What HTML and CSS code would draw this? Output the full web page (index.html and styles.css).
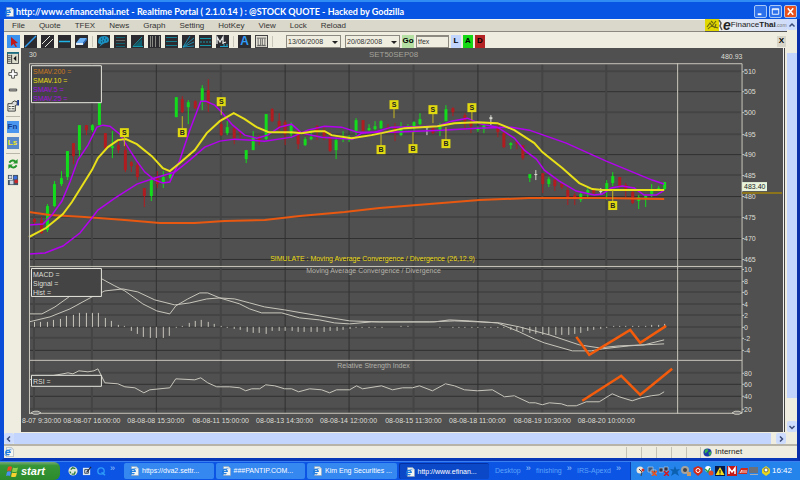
FILE: index.html
```html
<!DOCTYPE html>
<html lang="en">

<head>
    <meta charset="UTF-8">
    <meta name="viewport" content="width=device-width, initial-scale=1.0">
    <title>Realtime Portal - @STOCK QUOTE</title>
    <link rel="stylesheet" href="styles.css">
</head>

<body>
    <svg class="defs" aria-hidden="true">
        <symbol id="ie" viewBox="0 0 12 12">
            <path d="M3 .5h6l2.500 2.500v8.500H3z" fill="#f4f6f2" stroke="#8a97a8" stroke-width=".6"/>
            <path d="M9 .5V3h2.500z" fill="#b7c4d8"/>
            <path d="M2 6.500h5.500a2.700 2.700 0 1 0-1 2.200" fill="none" stroke="#1c7be0" stroke-width="1.500"/>
            <path d="M1.500 8Q0 11 3.500 9.500M6 3q2.500-1.500 2.500 1" fill="none" stroke="#1c7be0" stroke-width=".7"/>
        </symbol>
    </svg>

    <header class="titlebar">
        <svg class="icon"><use href="#ie"/></svg>
        <h1>http://www.efinancethai.net - Realtime Portal ( 2.1.0.14 ) : @STOCK QUOTE - Hacked by Godzilla</h1>
        <div class="window-buttons">
            <button aria-label="Minimize"><svg viewBox="0 0 12 12"><path d="M3 9h4" stroke="#fff" stroke-width="2"/></svg></button>
            <button aria-label="Maximize"><svg viewBox="0 0 12 12"><path d="M2.500 3h7v6h-7zM2.500 4h7" fill="none" stroke="#fff"/></svg></button>
            <button class="close" aria-label="Close"><svg viewBox="0 0 12 12"><path d="M3 2.500l6 7M9 2.500l-6 7" stroke="#fff" stroke-width="1.700"/></svg></button>
        </div>
    </header>

    <div class="window">
        <div class="page">
            <main class="content">
                <div class="top-row">
                    <nav class="menu">
                        <a href="#">File</a>
                        <a href="#">Quote</a>
                        <a href="#">TFEX</a>
                        <a href="#">News</a>
                        <a href="#">Graph</a>
                        <a href="#">Setting</a>
                        <a href="#">HotKey</a>
                        <a href="#">View</a>
                        <a href="#">Lock</a>
                        <a href="#">Reload</a>
                    </nav>
                    <div class="logo">
                        <svg class="logo-mark" viewBox="0 0 18 12">
                            <path d="M0 0h14v12H0z" fill="#e0d800"/>
                            <path d="M2 8l3-4 2 3 4-5M3 10q4-5 7-1M6 2l2 2M11 5l-1 3 3 1" fill="none" stroke="#6e6a10" stroke-width="1.200"/>
                            <path d="M14 1l2 3-1 3 2 4" fill="none" stroke="#555" stroke-width="1.500"/>
                        </svg>
                        <span class="logo-e">e</span><span>Finance</span><b>Thai</b><small>.com</small>
                    </div>
                </div>

                <div class="toolbar">
                    <button class="tool selected" aria-label="Pointer"><svg viewBox="0 0 13 13"><path d="M4 2l7 6-3 .5 2 3-1.500.5-2-3L4 11z" fill="#c01818"/></svg></button>
                    <button class="tool" aria-label="Line"><svg viewBox="0 0 13 13"><path d="M1 12L12 1" stroke="#2f9bf0" stroke-width="1.500"/></svg></button>
                    <button class="tool" aria-label="Parallel lines"><svg viewBox="0 0 13 13"><path d="M1 9l8-8M4 12l8-8" stroke="#e8e8e0"/></svg></button>
                    <button class="tool" aria-label="Horizontal line"><svg viewBox="0 0 13 13"><path d="M1 6.500h11" stroke="#1fb4e8" stroke-width="1.500"/></svg></button>
                    <button class="tool" aria-label="Eraser"><svg viewBox="0 0 13 13"><path d="M5 3h7l-4 5H1z" fill="#6ab0f4"/><path d="M1 8h7v2H1z" fill="#dce9f7"/><path d="M8 8l4-5v2L8 10z" fill="#2b6dc4"/></svg></button>
                    <span class="divider"></span>
                    <button class="tool" aria-label="Color"><svg viewBox="0 0 13 13"><path d="M1 7q0-6 6-6 5 0 5 4 0 3-4 3l-2 1-4 3 2-3q-3 0-3-2z" fill="#1b8fc0"/><path d="M4 4h1M7 3h1M9 5h1M4 7h1M6 6h1" stroke="#103040"/></svg></button>
                    <button class="tool" aria-label="Grid lines"><svg viewBox="0 0 13 13"><path d="M2 2.500h9M2 8.500h9M2 11.500h9" stroke="#12606e"/><path d="M2 5.500h9" stroke="#666"/></svg></button>
                    <button class="tool" aria-label="Fan"><svg viewBox="0 0 13 13"><path d="M3 11.500L11 4v7.500z" fill="#0c6070"/><path d="M2 11.500L11 2M2 11.500h10" stroke="#1496a8"/></svg></button>
                    <button class="tool" aria-label="Time zones"><svg viewBox="0 0 13 13"><path d="M2.500 1v11M4.500 1v11M7.500 1v11M11.500 1v11" stroke="#a0a098" stroke-width=".8"/></svg></button>
                    <button class="tool" aria-label="Retracement"><svg viewBox="0 0 13 13"><path d="M1 2.500h11M1 6.500h11M1 10.500h11" stroke="#147c8c"/></svg></button>
                    <button class="tool" aria-label="Speed lines"><svg viewBox="0 0 13 13"><path d="M1 12L8 1M1 12l11-9M1 12l11-5M1 12l11-1" stroke="#1ca0c8" stroke-width=".8"/></svg></button>
                    <button class="tool" aria-label="Channel"><svg viewBox="0 0 13 13"><path d="M1 3.500h11M1 10.500h11" stroke="#1496a8"/><path d="M1 7h11" stroke="#1496a8" stroke-dasharray="2 1"/></svg></button>
                    <button class="tool" aria-label="Magnet price"><svg viewBox="0 0 13 13"><path d="M1 9V2l3 5 3-5v7M7 8l3-1" fill="none" stroke="#e8e8e8" stroke-width="1.300"/><path d="M4 11.500h8M8 9v3M11 9v3" stroke="#1ca0c8"/></svg></button>
                    <span class="divider"></span>
                    <button class="tool letter">A</button>
                    <button class="tool pale" aria-label="Panels"><svg viewBox="0 0 13 13"><path d="M1 2.500h11M2.500 3v8h3V3M7.500 3v8h3V3M1 11.500h11" fill="none" stroke="#555"/></svg></button>
                    <span class="divider"></span>
                    <label class="date"><select aria-label="From date"><option>13/06/2008</option></select></label>
                    <label class="date"><select aria-label="To date"><option>20/08/2008</option></select></label>
                    <div class="symbol-box">
                        <button class="go">Go</button>
                        <input type="text" value="tfex" aria-label="Symbol">
                        <button class="mode-l">L</button>
                        <button class="mode-a">A</button>
                        <button class="mode-d">D</button>
                    </div>
                    <button class="close-chart">X</button>
                </div>

                <div class="workspace">
                    <aside class="side-tools">
                        <button aria-label="Toggle panel"><svg viewBox="0 0 13 13"><path d="M.5.5h12v12H.5z" fill="#dcdccc" stroke="#444"/><path d="M0 1h13" stroke="#1c6c80" stroke-width="2"/><path d="M1 4h3M1 6h3M1 8h3M1 10h3" stroke="#555"/><path d="M5 3v9" stroke="#333"/><path d="M10 4v6L7 7z" fill="#111"/></svg></button>
                        <button aria-label="Zoom in"><svg viewBox="0 0 13 13"><path d="M5 2h3v3h3v3H8v3H5V8H2V5h3z" fill="#fff" stroke="#444"/></svg></button>
                        <button aria-label="Zoom out"><svg viewBox="0 0 13 13"><path d="M2.500 5.500h8v2h-8z" fill="#bbb" stroke="#444"/></svg></button>
                        <button aria-label="Properties"><svg viewBox="0 0 13 13"><path d="M1 4h8v8H1z" fill="#f6f6ee" stroke="#333"/><path d="M2 7h2M5 7h3M2 9.500h2M5 9.500h3" stroke="#333"/><path d="M5 3l3-2 3 1v3l-2 1" fill="#ddd" stroke="#333"/><path d="M11 0h2v6h-2z" fill="#1c3c90"/></svg></button>
                        <hr>
                        <button class="blue-key">Fn</button>
                        <button class="blue-key yellow-key">Ls</button>
                        <hr>
                        <button aria-label="Refresh"><svg viewBox="0 0 13 13"><path d="M2.500 5q3-4 7-1M10.500 8q-3 4-7 1" fill="none" stroke="#24962c" stroke-width="2"/><path d="M11.500 1v5h-5zM1.500 12V7h5z" fill="#24962c"/></svg></button>
                        <button aria-label="Market map"><svg viewBox="0 0 13 13"><path d="M1 1h11v11H1z" fill="#456"/><path d="M2 2h3v3H2zM3 7h4v4H3z" fill="#cdd6e4"/><circle cx="9" cy="4" r="2" fill="#3a70e0"/><circle cx="10" cy="8" r="2" fill="#c82828"/><path d="M6 1v5H1" fill="none" stroke="#eee"/></svg></button>
                    </aside>

                    <svg class="chart" id="chart" viewBox="21 48 763 384" role="img" aria-label="SET50SEP08 price chart with MACD and RSI">
                        <g id="grid"></g>
                        <g id="candles"></g>
                        <g id="curves"></g>
                        <g id="markers"></g>
                        <path class="frame" d="M29.500 414V63.500h649M29 266.500h714M29 360.500h714M678.500 63v351M678 63.500h65v350M29 413.500h714"/>
                        <path class="slider" d="M31 413l3-1.500h4l3 1.500-3 1.500h-4zM733 413l3-1.500h4l3 1.500-3 1.500h-4z"/>

                        <text class="heading" x="394" y="57" text-anchor="middle">SET50SEP08</text>
                        <text class="label" x="29" y="57">30</text>
                        <text class="label" x="722" y="59">480.93</text>
                        <text class="simulate" x="373" y="261" text-anchor="middle">SIMULATE : Moving Average Convergence / Divergence (26,12,9)</text>
                        <text class="caption" x="374" y="273" text-anchor="middle">Moving Average Convergence / Divergence</text>
                        <text class="caption" x="374" y="368" text-anchor="middle">Relative Strength Index</text>

                        <path class="legend" d="M31.500 65.500h70v37h-70zM31.500 268.500h70v28h-70zM31.500 375.500h70v11h-70z"/>
                        <text class="label orange" x="33" y="74">SMAV.200 =</text>
                        <text class="label yellow" x="33" y="83">SMAV.10 =</text>
                        <text class="label purple" x="33" y="92">SMAV.5 =</text>
                        <text class="label purple" x="33" y="101">SMAV.25 =</text>
                        <text class="label" x="33" y="277">MACD =</text>
                        <text class="label" x="33" y="286">Signal =</text>
                        <text class="label" x="33" y="295">Hist =</text>
                        <text class="label" x="33" y="384">RSI =</text>

                        <path d="M743 193h40" stroke="#8c741c" stroke-width="2"/>
                        <path d="M743 182h25v9h-25z" fill="#e8f4dc"/>
                        <text class="last" x="745" y="189">483.40</text>
                    </svg>
                </div>
            </main>

            <div class="scroll-y">
                <button aria-label="Scroll up"><svg viewBox="0 0 10 10"><path d="M2.500 6.500L5 4l2.500 2.500" fill="none" stroke="#3a4a78" stroke-width="1.500"/></svg></button>
                <div class="thumb"></div>
                <button aria-label="Scroll down"><svg viewBox="0 0 10 10"><path d="M2.500 4L5 6.500 7.500 4" fill="none" stroke="#3a4a78" stroke-width="1.500"/></svg></button>
            </div>
        </div>

        <div class="scroll-x">
            <button aria-label="Scroll left"><svg viewBox="0 0 10 10"><path d="M6 2.500L3.500 5 6 7.500" fill="none" stroke="#3a4a78" stroke-width="1.500"/></svg></button>
            <div class="thumb"></div>
            <button aria-label="Scroll right"><svg viewBox="0 0 10 10"><path d="M4 2.500L6.500 5 4 7.500" fill="none" stroke="#3a4a78" stroke-width="1.500"/></svg></button>
        </div>

        <div class="statusbar">
            <svg class="icon"><use href="#ie"/></svg>
            <div class="panels"><i></i><i></i><i></i><i></i><i></i></div>
            <div class="zone">
                <svg viewBox="0 0 10 10"><circle cx="5" cy="5" r="4.500" fill="#1c3ca8"/><path d="M2 2l3-1 1 2-2 2-2 1zM6 5l3-1v3L7 9z" fill="#35b24a"/></svg>
                Internet
            </div>
        </div>
    </div>

    <footer class="taskbar">
        <button class="start">
            <svg viewBox="0 0 13 12"><path d="M2 2q2-1.500 4 0L5 6Q3 5 1 6z" fill="#ee4a20"/><path d="M7 2.500q2 1 5 0L11 6.500q-3 1-5 0z" fill="#8fd04a"/><path d="M1 7q2-1.500 4 0l-1 4q-2-1-4 0z" fill="#4a90f0"/><path d="M6 7.500q2 1 5 0l-1 4q-3 1-5 0z" fill="#f8d030"/></svg>
            start
        </button>
        <div class="quick">
            <svg viewBox="0 0 11 11"><circle cx="5.500" cy="5.500" r="5" fill="#e0e8dc"/><path d="M3 4l2-2 3 1M8 6L7 9H4M2 6l1 2" fill="none" stroke="#2a7a3c" stroke-width="1.500"/></svg>
            <svg viewBox="0 0 11 11"><path d="M1 2h8v8H1z" fill="#dce8f4"/><path d="M3 4h4v4H3z" fill="none" stroke="#345"/><path d="M5 7l5-6" stroke="#223" stroke-width="1.200"/></svg>
            <svg viewBox="0 0 11 11"><circle cx="5.500" cy="5.500" r="3.500" fill="none" stroke="#2f9bf8" stroke-width="1.500"/><path d="M6 7l4 3" stroke="#2f9bf8" stroke-width="1.500"/></svg>
            <span class="more">»</span>
        </div>
        <div class="tasks">
            <button><svg class="icon"><use href="#ie"/></svg><span>https://dva2.settr...</span></button>
            <button><svg class="icon"><use href="#ie"/></svg><span>###PANTIP.COM...</span></button>
            <button><svg class="icon"><use href="#ie"/></svg><span>Kim Eng Securities ...</span></button>
            <button class="active"><svg class="icon"><use href="#ie"/></svg><span>http://www.efinan...</span></button>
        </div>
        <div class="bands">
            <a href="#">Desktop</a><span class="more">»</span>
            <a href="#">finishing</a><span class="more">»</span>
            <a href="#">IRS-Apexd</a><span class="more">»</span>
        </div>
        <div class="tray">
            <svg viewBox="0 0 10 10"><circle cx="4" cy="4" r="3.500" fill="#e8e4dc"/><path d="M3 3l3 3-1 4" fill="none" stroke="#444"/><circle cx="7" cy="4" r="1.500" fill="#d83020"/></svg>
            <svg viewBox="0 0 10 10"><path d="M1 1h5v5H1zM4 4h5v4H4z" fill="#405878" stroke="#cde" stroke-width=".6"/><path d="M5 5l5 5M10 5l-5 5" stroke="#f05018" stroke-width="1.500"/></svg>
            <svg viewBox="0 0 10 10"><path d="M0 2h4v4H0zM5 1h4v4H5z" fill="#334" stroke="#cde" stroke-width=".6"/><path d="M5 5l5 5M10 5l-5 5" stroke="#d81818" stroke-width="1.500"/></svg>
            <svg viewBox="0 0 10 10"><path d="M5 0l1.300 3.500L10 3 7.500 5.700 9 10 5 7.500 1 10l1.500-4.300L0 3l3.700.5z" fill="#0c60b0"/></svg>
            <svg viewBox="0 0 10 10"><circle cx="4" cy="4" r="4" fill="#a8a49c"/><circle cx="4" cy="4" r="2" fill="#444"/><path d="M6 6h4v4H6z" fill="#c89a68"/></svg>
            <svg viewBox="0 0 10 10"><path d="M5 0l4.500 2v4L5 10 .5 6V2z" fill="#d42818"/><circle cx="5" cy="4.500" r="2" fill="none" stroke="#fff"/></svg>
            <svg viewBox="0 0 10 10"><circle cx="4" cy="3" r="3" fill="#fff"/><path d="M1 3l3 3 2-4" fill="none" stroke="#2aa048" stroke-width="1.500"/><circle cx="7" cy="7" r="2.500" fill="#e04828"/></svg>
            <svg viewBox="0 0 10 10"><path d="M0 0h10v10H0z" fill="#081848"/><path d="M5 1l4.500 8h-9z" fill="#f8e020"/><path d="M5 4v3M5 7.500v1" stroke="#111"/></svg>
            <svg viewBox="0 0 10 10"><path d="M0 0h10v10H0z" fill="#c41818"/><path d="M2 8V2l3 4 3-4v6" fill="none" stroke="#fff" stroke-width="1.500"/></svg>
            <svg viewBox="0 0 10 10"><path d="M0 8l3-6h7L9 8H0z" fill="#d42818"/><path d="M2 7l2-3v3M6 4v3M8 4v3" fill="none" stroke="#fff" stroke-width=".8"/></svg>
            <svg viewBox="0 0 10 10"><path d="M0 1h9v6H0z" fill="#6c7078"/><path d="M1 8h8v1H1z" fill="#a8acb0"/></svg>
            <svg viewBox="0 0 10 10"><path d="M1 3l4-3 4 3v4l-4 3-4-3z" fill="#e8d420"/><circle cx="5" cy="4" r="2" fill="#fff" stroke="#554" stroke-width=".8"/></svg>
            <time>16:42</time>
        </div>
    </footer>

    <script src="chart.js"></script>
</body>

</html>
```
FILE: styles.css
```css
* {
    box-sizing: border-box;
}

body {
    margin: 0;
    height: 100vh;
    display: flex;
    flex-direction: column;
    overflow: hidden;
    background: #0a54e0;
    font-family: "Liberation Sans", Arial, sans-serif;
    font-size: 8px;
    line-height: 10px;
    color: #333;
}

button {
    border: none;
    padding: 0;
    background: none;
    font-family: inherit;
    font-size: 8px;
    line-height: 10px;
}

a {
    color: inherit;
    text-decoration: none;
}

svg {
    display: block;
}

.defs {
    position: absolute;
    width: 0;
    height: 0;
}

.icon {
    width: 10px;
    height: 10px;
    flex: none;
}

/* Title bar */
.titlebar {
    flex: none;
    height: 19px;
    display: flex;
    align-items: center;
    gap: 2px;
    padding: 2px 3px 0 4px;
    border-top: 2px solid #2f8cf4;
    background: #0855e4;
}

.titlebar h1 {
    flex: 1;
    margin: 0;
    font-family: Lato, "Liberation Sans", sans-serif;
    font-size: 9px;
    line-height: 12px;
    font-weight: bold;
    color: #fff;
    white-space: nowrap;
}

.window-buttons {
    display: flex;
    gap: 2px;
}

.window-buttons button {
    width: 13px;
    height: 13px;
    border: 1px solid #a8c8f8;
    border-radius: 2px;
    background: #2c70ec;
}

.window-buttons .close {
    background: #e8501c;
}

/* Window body */
.window {
    flex: 1;
    min-height: 0;
    display: flex;
    flex-direction: column;
    border: solid #0a4cd8;
    border-width: 0 3px 3px 4px;
    border-right-color: #0a2ea8;
    border-bottom-color: #0838b8;
    background: #eeede0;
}

.page {
    flex: 1;
    min-height: 0;
    display: flex;
}

.content {
    flex: 1;
    min-width: 0;
    display: flex;
    flex-direction: column;
}

.top-row {
    flex: none;
    display: flex;
    height: 13px;
}

.menu {
    flex: 1;
    display: flex;
    align-items: center;
    gap: 14px;
    padding-left: 8px;
    border-top: 1px solid #f8f8f0;
    border-bottom: 1px solid #8c8a80;
    background: #dad8ca;
}

.logo {
    flex: none;
    width: 82px;
    display: flex;
    align-items: center;
    border-bottom: 1px solid #555;
    background: linear-gradient(90deg, #f0f0ec, #d0dcf8);
    color: #222;
}

.logo-mark {
    flex: none;
    width: 18px;
    height: 12px;
}

.logo-e {
    font-size: 14px;
    font-style: italic;
    font-weight: bold;
}

.logo small {
    font-size: 5px;
    color: #777;
}

/* Toolbar */
.toolbar {
    flex: none;
    height: 16px;
    display: flex;
    align-items: center;
    gap: 4px;
    padding: 2px 1px 0 3px;
}

.tool {
    flex: none;
    width: 13px;
    height: 13px;
    background: #2c2c30;
}

.tool.selected {
    background: #3a92ee;
}

.tool.letter {
    font-size: 12px;
    font-weight: bold;
    color: #2f9bf8;
}

.tool.pale {
    border: 1px solid #444;
    background: #e4e2d6;
}

.divider {
    width: 1px;
    height: 11px;
    background: #c8c6b8;
}

.divider:last-of-type {
    margin-right: 9px;
}

.date {
    position: relative;
    flex: none;
}

.date::after {
    content: "";
    position: absolute;
    right: 3px;
    top: 6px;
    border: 3px solid transparent;
    border-top-color: #222;
    border-bottom: 0;
    pointer-events: none;
}

.date select,
.symbol-box input {
    display: block;
    width: 55px;
    height: 13px;
    padding: 0 1px;
    appearance: none;
    border: 1px solid #8c8a80;
    border-radius: 0;
    background: #eeede0;
    font-family: "Liberation Sans", Arial, sans-serif;
    font-size: 7px;
    color: #333;
}

.symbol-box {
    display: flex;
    gap: 2px;
    margin-left: -2px;
}

.symbol-box input {
    width: 33px;
    border-width: 2px 1px 1px;
}

.symbol-box button {
    width: 10px;
    height: 13px;
    font-weight: bold;
}

.symbol-box .go {
    width: 12px;
    background: #b4e0a4;
}

.symbol-box .mode-l {
    background: #c0d4fc;
}

.symbol-box .mode-a {
    background: #14d814;
}

.symbol-box .mode-d {
    background: #b42424;
}

.close-chart {
    width: 9px;
    height: 11px;
    margin-left: auto;
    background: #d8d6c8;
    font-weight: bold;
}

/* Side tools and chart */
.workspace {
    flex: 1;
    min-height: 0;
    display: flex;
}

.side-tools {
    flex: none;
    width: 17px;
    display: flex;
    flex-direction: column;
    align-items: center;
    gap: 4px;
    padding-top: 4px;
}

.side-tools button {
    width: 12px;
    height: 12px;
}

.side-tools hr {
    width: 14px;
    height: 1px;
    margin: 0;
    border: none;
    background: #b8b6a8;
}

.side-tools .blue-key {
    background: #4a96ee;
    font-weight: bold;
    color: #123c90;
}

.side-tools .yellow-key {
    background: #5888c8;
    color: #f4e820;
}

.chart {
    flex: 1;
    min-width: 0;
    min-height: 0;
    margin-right: 3px;
    border-right: 1px solid #eee;
    background: #505050;
    box-shadow: 1px 0 #444;
    font-size: 7px;
}

.grid-soft {
    stroke: #444;
    stroke-width: 2;
}

.grid-dark {
    stroke: #303030;
}

.frame {
    fill: none;
    stroke: #c8c6bc;
}

.slider {
    fill: #777;
    stroke: #c8c6bc;
}

.legend {
    fill: #444;
    stroke: #e8e8e0;
}

.heading {
    font-size: 8px;
    fill: #a4a29a;
}

.caption {
    fill: #b4b2aa;
}

.label {
    fill: #deded6;
}

.simulate,
.yellow {
    fill: #ecdc14;
}

.orange {
    fill: #c87820;
}

.purple {
    fill: #a010e0;
}

.last {
    fill: #222;
}

.marker {
    fill: #e0d810;
}

.marker-text {
    font-weight: bold;
    fill: #222;
}

/* Scroll bars */
.scroll-y {
    flex: none;
    width: 10px;
    display: flex;
    flex-direction: column;
}

.scroll-y button,
.scroll-x button {
    flex: none;
    width: 10px;
    height: 11px;
    border-radius: 2px;
    background: #cddcfc;
}

.scroll-y .thumb {
    flex: 1;
    margin: 23px 0;
    background: #c3d5fd;
}

.scroll-x {
    flex: none;
    display: flex;
    height: 11px;
    padding-right: 11px;
    margin-top: 1px;
    background: #eeede0;
}

.scroll-x .thumb {
    flex: 1;
    margin-right: 5px;
    background: #c3d5fd;
}

/* Status bar */
.statusbar {
    flex: none;
    height: 14px;
    display: flex;
    align-items: center;
    border-top: 2px solid #b8b4a8;
}

.panels {
    display: flex;
    gap: 14px;
    margin-left: auto;
    padding-right: 13px;
}

.panels i,
.zone {
    border-left: 1px solid #c4c2b4;
    height: 11px;
}

.zone {
    width: 97px;
    display: flex;
    align-items: center;
    gap: 3px;
    padding-left: 2px;
    color: #222;
}

.zone svg {
    width: 9px;
    height: 9px;
}

/* Taskbar */
.taskbar {
    flex: none;
    height: 19px;
    display: flex;
    align-items: stretch;
    border-top: 1px solid #3a80f0;
    background: #0c54e4;
    color: #fff;
}

.start {
    width: 60px;
    display: flex;
    align-items: center;
    gap: 2px;
    padding-left: 6px;
    border-radius: 0 6px 6px 0;
    background: linear-gradient(#78a878, #369636 20%, #2c8a2c);
    font-size: 11px;
    font-style: italic;
    font-weight: bold;
    color: #fff;
}

.start svg {
    width: 13px;
    height: 12px;
}

.quick {
    width: 64px;
    display: flex;
    align-items: center;
    gap: 4px;
    padding-left: 8px;
}

.quick svg {
    width: 10px;
    height: 10px;
}

.more {
    padding-bottom: 6px;
    font-size: 9px;
    color: #9cc4fc;
}

.tasks {
    flex: 1;
    display: flex;
    gap: 2px;
}

.tasks button {
    flex: 1;
    min-width: 0;
    display: flex;
    align-items: center;
    gap: 3px;
    padding-left: 5px;
    margin: 1px 0;
    border-radius: 2px;
    background: #3488f0;
    font-size: 7px;
    color: #fff;
    white-space: nowrap;
}

.tasks .active {
    background: #0a48c8;
    border: solid #0630a0;
    border-width: 1px 0 0 1px;
}

.bands {
    width: 141px;
    display: flex;
    align-items: center;
    justify-content: space-between;
    padding: 0 9px 0 6px;
    font-size: 7px;
    color: #5ca4fc;
}

.tray {
    width: 170px;
    display: flex;
    align-items: center;
    justify-content: space-between;
    padding: 0 8px 0 5px;
    border-left: 1px solid #0a3cb0;
    background: #2484ec;
}

.tray svg {
    width: 10px;
    height: 10px;
}
```
FILE: chart.js
```javascript
const svgNS = 'http://www.w3.org/2000/svg';

function add(groupId, tag, attrs, text) {
    const el = document.createElementNS(svgNS, tag);
    for (const key in attrs) el.setAttribute(key, attrs[key]);
    if (text !== undefined) el.textContent = text;
    document.getElementById(groupId).appendChild(el);
}

// Horizontal grid and value labels: [label, y, dark]
const levels = [
    [510, 71, 0], [505, 91, 1], [500, 112, 0], [495, 134, 0], [490, 154, 1],
    [485, 175, 0], [480, 196, 1], [475, 217, 0], [470, 238, 1], [465, 259, 1],
    [10, 269, 1], [8, 281, 0], [6, 292, 0], [4, 304, 0], [2, 315, 0],
    [0, 327, 0], [-2, 338, 0], [-4, 350, 1],
    [80, 373, 0], [60, 384, 1], [40, 396, 1], [20, 409, 0]
];

const times = [
    [34, '', 0], [92, '08-08-07 16:00:00', 0], [156, '08-08-08 15:30:00', 1],
    [221, '08-08-11 15:00:00', 0], [285, '08-08-13 14:30:00', 1], [349, '08-08-14 12:00:00', 1],
    [414, '08-08-15 11:30:00', 0], [478, '08-08-18 11:00:00', 1], [543, '08-08-19 10:30:00', 0],
    [607, '08-08-20 10:00:00', 0]
];

levels.forEach(([label, y, dark]) => {
    const ly = dark ? y + 0.5 : y;
    add('grid', 'path', { d: `M30 ${ly}h713`, class: dark ? 'grid-dark' : 'grid-soft' });
    add('grid', 'path', { d: `M743 ${y + 0.5}h2`, stroke: '#c8c6bc' });
    add('grid', 'text', { x: 745, y: y + 3, class: 'label' }, label);
});

times.forEach(([x, label, dark]) => {
    add('grid', 'path', { d: `M${dark ? x + 0.5 : x} 64v349`, class: dark ? 'grid-dark' : 'grid-soft' });
    add('grid', 'text', { x: x, y: 423, class: 'label', 'text-anchor': 'middle' }, label);
});
add('grid', 'text', { x: 22, y: 423, class: 'label' }, '8-07 9:30:00');

// Candles: [x, high, low, top, bottom, type]
const candles = [
    [34, 218, 224, 219, 222, 'r'], [41, 217, 234, 220, 233, 'r'], [47, 204, 232, 206, 230, 'g'],
    [54, 181, 207, 184, 206, 'g'], [61, 171, 186, 178, 184, 'g'], [67, 151, 180, 151, 177, 'g'],
    [73, 143, 164, 143, 156, 'r'], [79, 125, 157, 125, 150, 'g'], [86, 125, 135, 125, 130, 'r'],
    [92, 124, 132, 125, 130, 'g'], [99, 98, 125, 98, 125, 'g'], [105, 133, 149, 133, 148, 'r'],
    [112, 131, 158, 146, 148, 'g'], [118, 140, 153, 145, 150, 'r'], [125, 145, 172, 150, 170, 'r'],
    [131, 161, 172, 162, 166, 'r'], [137, 162, 180, 165, 177, 'r'], [144, 188, 207, 188, 196, 'r'],
    [151, 178, 201, 180, 196, 'g'], [157, 171, 188, 178, 184, 'r'], [163, 171, 188, 177, 183, 'g'],
    [170, 172, 180, 174, 178, 'g'], [176, 97, 117, 97, 117, 'g'], [182, 96, 113, 99, 112, 'r'],
    [188, 100, 124, 102, 107, 'g'], [195, 100, 109, 101, 108, 'r'], [202, 85, 110, 88, 101, 'g'],
    [208, 79, 112, 90, 104, 'r'], [221, 118, 136, 124, 135, 'r'], [227, 121, 135, 127, 133, 'g'],
    [234, 127, 144, 128, 138, 'r'], [240, 131, 138, 132, 133, 'r'], [246, 150, 163, 150, 159, 'g'],
    [253, 131, 150, 137, 150, 'g'], [259, 135, 145, 138, 141, 'r'], [266, 114, 140, 114, 139, 'g'],
    [272, 108, 122, 109, 121, 'r'], [279, 113, 133, 121, 128, 'r'], [285, 120, 145, 122, 134, 'r'],
    [291, 122, 138, 125, 134, 'g'], [298, 130, 149, 131, 144, 'r'], [305, 137, 146, 139, 145, 'g'],
    [311, 130, 140, 137, 139, 'g'], [317, 125, 140, 126, 132, 'r'], [324, 127, 140, 130, 136, 'r'],
    [330, 132, 152, 137, 151, 'r'], [336, 137, 159, 140, 150, 'g'], [343, 131, 142, 138, 139, 'g'],
    [349, 135, 142, 138, 140, 'g'], [356, 118, 135, 120, 131, 'g'], [363, 120, 131, 120, 131, 'r'],
    [369, 124, 131, 128, 130, 'g'], [375, 121, 130, 126, 129, 'g'], [381, 120, 129, 121, 128, 'g'],
    [388, 124, 129, 127, 129, 'r'], [395, 123, 141, 128, 132, 'r'], [401, 122, 136, 126, 135, 'g'],
    [408, 124, 129, 126, 128, 'g'], [414, 121, 133, 122, 126, 'g'], [420, 113, 125, 119, 124, 'g'],
    [427, 126, 135, 127, 128, 'w'], [433, 127, 134, 128, 133, 'r'], [440, 123, 136, 125, 131, 'g'],
    [446, 105, 121, 109, 121, 'g'], [453, 107, 116, 108, 112, 'r'], [465, 113, 130, 115, 121, 'r'],
    [471, 120, 133, 122, 126, 'r'], [478, 126, 132, 128, 130, 'g'], [484, 122, 133, 125, 129, 'g'],
    [491, 115, 125, 117, 119, 'w'], [498, 123, 137, 128, 132, 'r'], [504, 131, 148, 133, 147, 'r'],
    [511, 142, 149, 143, 145, 'g'], [517, 141, 149, 142, 144, 'r'], [523, 145, 160, 145, 158, 'r'],
    [530, 174, 182, 174, 178, 'g'], [536, 170, 180, 174, 175, 'w'], [543, 173, 193, 173, 184, 'r'],
    [549, 177, 187, 179, 184, 'g'], [555, 178, 191, 180, 186, 'r'], [562, 183, 189, 184, 187, 'r'],
    [568, 187, 205, 190, 199, 'r'], [575, 193, 205, 195, 197, 'r'], [581, 192, 202, 194, 200, 'g'],
    [588, 188, 198, 190, 193, 'g'], [594, 188, 194, 189, 193, 'r'], [601, 188, 195, 191, 192, 'w'],
    [607, 180, 200, 183, 190, 'g'], [613, 172, 186, 176, 183, 'g'], [620, 177, 188, 177, 186, 'r'],
    [626, 183, 197, 185, 190, 'r'], [633, 191, 204, 192, 203, 'r'], [639, 195, 209, 197, 201, 'g'],
    [646, 195, 207, 196, 198, 'g'], [652, 184, 197, 190, 196, 'g'], [659, 186, 190, 188, 190, 'g'],
    [665, 182, 190, 182, 189, 'g']
];
const colors = { r: '#b01c20', g: '#12dc1c', w: '#d8d8d0' };

candles.forEach(([x, high, low, top, bottom, type]) => {
    add('candles', 'path', { d: `M${x + 0.5} ${high}V${low}`, stroke: colors[type] });
    add('candles', 'rect', { x: x - 1, y: top, width: 3, height: bottom - top, fill: colors[type] });
});

// MACD histogram, one bar per candle
const hist = [
    5, 5, 5, 7, 8, 11, 12, 14, 14, 14, 14, 9, 6, 2, 1, -4, -7, -10, -11, -11, -11, -9,
    -1, 1, 4, 6, 7, 5, 3, 1, -1, -2, -3, -5, -6, -6, -7, -4, -4, -4, -4, -5, -5, -5, -5, -5,
    -4, -4, -3, -2, -1, -1, -1, -1, -1, 0, 0, 1, 1, 0, 0, 0, 0, -1, 0, -1, -1, -1, -1, -1, -1, -1,
    -1, -1, -3, -4, -5, -6, -7, -8, -8, -8, -8, -8, -7, -6, -4, -3, -2, -1, 1, 1, 1, 1, 1, 1, 2, 2, 3
];
hist.forEach((value, i) => {
    const x = Math.round(34 + i * 6.44) + 0.5;
    add('candles', 'path', { d: `M${x} 327V${327 - value}`, stroke: '#c8c6bc' });
});

const curves = [
    ['#e85810', 2, '29,212 50,215 85,217 125,220 160,223 195,223 225,221 265,220 300,216 345,212 380,208 430,204 480,200 530,198 602,198 665,199'],
    ['#b400f0', 1.5, '29,254 45,253 63,246 80,233 92,218 98,210 115,198 137,184 155,178 175,172 190,160 205,147 220,141 235,139 265,141 292,137 308,130 325,126 342,127 358,132 392,132 442,130 478,128 512,127 530,130 567,143 607,161 653,180 665,184'],
    ['#b400f0', 1.5, '29,225 43,224 52,215 62,201 70,182 78,160 88,145 97,127 103,125 110,126 120,134 128,147 137,161 145,172 155,180 163,183 170,182 180,160 190,130 201,101 206,101 215,105 222,112 233,125 245,135 257,138 268,135 280,127 292,124 302,133 322,137 353,139 362,133 375,132 392,127 438,126 452,121 468,118 482,124 498,127 515,138 525,150 537,159 545,170 560,181 577,191 595,195 603,194 612,188 623,186 635,188 645,195 657,195 662,192 665,190'],
    ['#e8e018', 2, '29,237 46,228 63,214 72,202 92,170 98,158 108,147 118,140 126,139 137,144 152,156 163,168 170,171 180,163 195,150 207,133 220,121 234,113 245,119 257,127 269,132 292,132 302,133 315,131 325,131 332,135 352,138 372,135 382,133 405,128 438,126 455,123 478,122 498,123 515,130 535,143 543,152 563,168 580,183 593,189 603,190 665,190'],
    ['#c8c6bc', 1, '29,314 42,314 55,307 69,297 92,280 98,277 102,279 115,286 125,291 143,304 157,311 170,314 176,306 188,299 200,293 208,293 220,298 240,304 250,309 262,313 282,313 300,318 320,320 335,323 350,324 372,322 435,322 450,320 470,321 498,323 520,332 535,339 545,343 573,351 592,351 603,349 630,346 645,345 665,340'],
    ['#c8c6bc', 1, '29,322 50,317 70,309 92,297 105,291 123,289 138,292 155,300 175,305 190,303 207,299 220,298 235,299 250,303 265,307 285,310 320,316 350,321 380,322 430,322 455,321 480,322 500,323 520,327 535,331 550,335 580,345 600,348 620,346 645,345 665,344'],
    ['#c8c6bc', 1, '29,380 63,374 68,373 73,374 79,371 88,372 94,371 98,369 105,383 118,384 125,387 135,388 144,393 150,390 170,388 176,379 195,380 201,378 208,383 217,387 230,387 240,388 246,391 252,389 260,389 266,385 275,386 285,389 292,389 299,392 310,389 322,390 330,393 337,390 350,390 357,386 363,389 382,386 393,390 403,388 413,388 420,386 433,391 446,384 455,386 465,390 478,391 493,390 505,397 515,396 530,403 536,403 543,405 550,403 562,404 568,406 577,406 587,402 600,402 613,394 620,397 633,401 642,398 652,396 660,395 665,392'],
    ['#f45c0c', 2.5, '577,337 590,355 631,330 641,343 667,326'],
    ['#f45c0c', 2.5, '583,401 622,376 641,395 673,369']
];
curves.forEach(([stroke, width, points]) => {
    add('curves', 'polyline', { points: points, fill: 'none', stroke: stroke, 'stroke-width': width });
});

// Signals: [letter, x, y, end of the stem]
const signals = [
    ['S', 124, 132, 146], ['B', 182, 132, 116], ['S', 221, 101, 115], ['S', 394, 104, 118],
    ['S', 433, 109, 123], ['S', 472, 107, 120], ['B', 381, 149, 132], ['B', 413, 148, 132],
    ['B', 446, 143, 127], ['B', 613, 205, 190]
];
signals.forEach(([letter, x, y, end]) => {
    add('markers', 'path', { d: `M${x + 0.5} ${y}V${end}`, stroke: '#c8b820' });
    add('markers', 'rect', { x: x - 4, y: y - 4, width: 9, height: 9, class: 'marker' });
    add('markers', 'text', { x: x + 0.5, y: y + 3, class: 'marker-text', 'text-anchor': 'middle' }, letter);
});
```
